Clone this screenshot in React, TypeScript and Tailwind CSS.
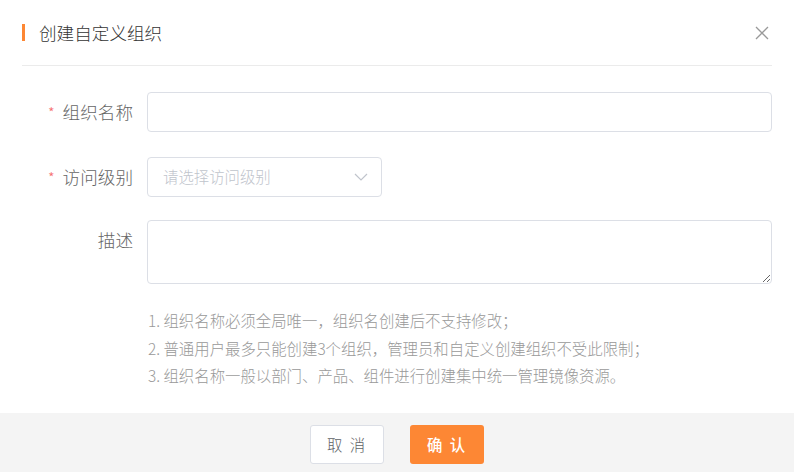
import React from "react";

const font = { fontFamily: '"Microsoft YaHei", "Noto Sans CJK SC", "Noto Sans", sans-serif' };

function Label({ text, required }: { text: string; required?: boolean }) {
  return (
    <div className="w-[125px] shrink-0 pr-[14px] flex justify-end items-center h-[40px] text-[17.6px] font-light text-[#666666]">
      {required && <span className="text-[#f56c6c] text-[15px] mr-[8px] leading-none">*</span>}
      <span>{text}</span>
    </div>
  );
}

export default function App() {
  return (
    <div className="w-[794px] h-[472px] bg-white flex flex-col" style={font}>
      <div className="px-[22px]">
        <div className="h-[66px] flex items-center border-b border-[#ebebeb]">
          <div className="w-[3px] h-[17px] bg-[#fd8734]" />
          <div className="ml-[14px] text-[17.6px] font-light text-[#333333] leading-none">创建自定义组织</div>
          <div className="ml-auto mr-[3px]">
            <svg width="14" height="14" viewBox="0 0 14 14">
              <path d="M1 1L13 13M13 1L1 13" stroke="#999999" strokeWidth="1.3" fill="none" />
            </svg>
          </div>
        </div>

        <div className="pt-[26px] flex flex-col">
          <div className="flex">
            <Label text="组织名称" required />
            <div className="flex-1 h-[40px] border border-[#dcdfe6] rounded-[4px] bg-white" />
          </div>
          <div className="flex mt-[25px]">
            <Label text="访问级别" required />
            <div className="w-[235px] h-[40px] border border-[#dcdfe6] rounded-[4px] bg-white flex items-center pl-[15px] pr-[13px]">
              <span className="text-[15.4px] font-light text-[#c0c4cc]">请选择访问级别</span>
              <svg className="ml-auto" width="14" height="8" viewBox="0 0 14 8">
                <path d="M1 1L7 7L13 1" stroke="#c0c4cc" strokeWidth="1.2" fill="none" />
              </svg>
            </div>
          </div>
          <div className="flex mt-[23px]">
            <div className="w-[125px] shrink-0 pr-[14px] flex justify-end h-[40px] items-center text-[17.6px] font-light text-[#666666]">
              描述
            </div>
            <textarea className="flex-1 h-[64px] border border-[#dcdfe6] rounded-[4px] bg-white outline-none resize-y" />
          </div>
          <div className="pl-[126px] mt-[23px] text-[15.4px] font-light leading-[27.5px] text-[#999999]">
            <div>1. 组织名称必须全局唯一，组织名创建后不支持修改；</div>
            <div>2. 普通用户最多只能创建3个组织，管理员和自定义创建组织不受此限制；</div>
            <div>3. 组织名称一般以部门、产品、组件进行创建集中统一管理镜像资源。</div>
          </div>
        </div>
      </div>

      <div className="mt-auto h-[59px] bg-[#f4f4f4] flex justify-center items-start pt-[12px] gap-[26px]">
        <button className="w-[74px] h-[39px] bg-white border border-[#dcdfe6] rounded-[3px] text-[15.4px] font-light text-[#606266] tracking-[2px]">
          取 消
        </button>
        <button className="w-[74px] h-[39px] bg-[#fd8734] rounded-[3px] text-[15.4px] font-medium text-white tracking-[2px]">
          确 认
        </button>
      </div>
    </div>
  );
}
